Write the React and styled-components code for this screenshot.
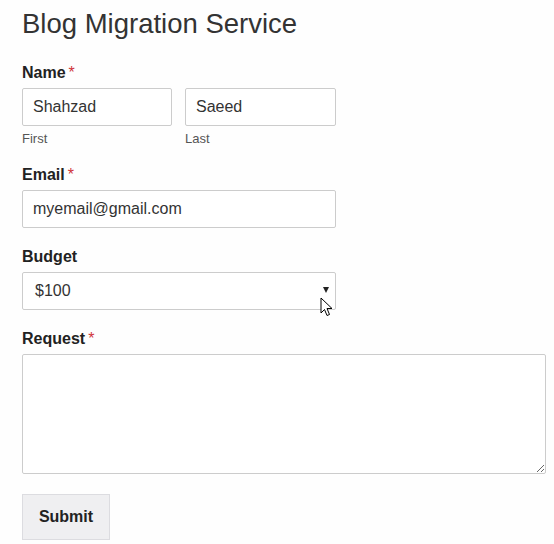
import styled, { createGlobalStyle } from 'styled-components';

const GlobalStyle = createGlobalStyle`
  body {
    margin: 0;
    background: #fefefe;
    font-family: 'Liberation Sans', Arial, sans-serif;
    color: #333;
  }
`;

const Page = styled.form`
  padding: 8px 22px 0 22px;
  width: 524px;
  box-sizing: border-box;
  position: relative;
`;

const Title = styled.h1`
  margin: 0 0 24px;
  font-size: 27.5px;
  font-weight: 400;
  line-height: 32px;
  color: #333;
`;

const Field = styled.div`
  margin-bottom: ${p => p.gap || 18}px;
`;

const Label = styled.div`
  font-weight: 700;
  font-size: 16px;
  line-height: 18px;
  margin-bottom: 6px;
  color: #222;
`;

const Req = styled.span`
  color: #d0343a;
  font-weight: 400;
  margin-left: 3px;
`;

const Row = styled.div`
  display: flex;
  gap: 13px;
`;

const Col = styled.div`
  display: flex;
  flex-direction: column;
`;

const Input = styled.input`
  box-sizing: border-box;
  width: ${p => p.w}px;
  height: 38px;
  border: 1px solid #ccc;
  border-radius: 2px;
  padding: 0 10px;
  font: 16px 'Liberation Sans', Arial, sans-serif;
  color: #333;
  background: #fff;
  outline: none;
`;

const SubLabel = styled.span`
  font-size: 13px;
  color: #555;
  margin-top: 5px;
  line-height: 15px;
`;

const SelectBox = styled.div`
  position: relative;
  box-sizing: border-box;
  width: 314px;
  height: 38px;
  border: 1px solid #ccc;
  border-radius: 2px;
  background: #fff;
  display: flex;
  align-items: center;
  padding: 0 12px;
  font-size: 16px;
  color: #333;
`;

const Arrow = styled.span`
  position: absolute;
  right: 6px;
  top: 14px;
  width: 0;
  height: 0;
  border-left: 3px solid transparent;
  border-right: 3px solid transparent;
  border-top: 6px solid #222;
`;

const TextArea = styled.textarea`
  display: block;
  box-sizing: border-box;
  width: 524px;
  height: 120px;
  border: 1px solid #ccc;
  border-radius: 2px;
  background: #fff;
  font: 16px 'Liberation Sans', Arial, sans-serif;
  outline: none;
`;

const Submit = styled.button`
  box-sizing: border-box;
  width: 88px;
  height: 46px;
  background: #efeff1;
  border: 1px solid #dcdce0;
  border-radius: 0;
  font: 700 16px 'Liberation Sans', Arial, sans-serif;
  color: #222;
`;

const Cursor = styled.svg`
  position: absolute;
  left: 320px;
  top: 297px;
  pointer-events: none;
`;

export default function App() {
  return (
    <>
      <GlobalStyle />
      <Page onSubmit={e => e.preventDefault()}>
        <Title>Blog Migration Service</Title>

        <Field gap={20}>
          <Label>Name<Req>*</Req></Label>
          <Row>
            <Col>
              <Input w={150} defaultValue="Shahzad" />
              <SubLabel>First</SubLabel>
            </Col>
            <Col>
              <Input w={151} defaultValue="Saeed" />
              <SubLabel>Last</SubLabel>
            </Col>
          </Row>
        </Field>

        <Field gap={20}>
          <Label>Email<Req>*</Req></Label>
          <Input w={314} defaultValue="myemail@gmail.com" />
        </Field>

        <Field gap={20}>
          <Label>Budget</Label>
          <SelectBox>
            $100
            <Arrow />
          </SelectBox>
        </Field>

        <Field gap={20}>
          <Label>Request<Req>*</Req></Label>
          <TextArea />
        </Field>

        <Submit type="submit">Submit</Submit>

        <Cursor width="13" height="20" viewBox="0 0 13 20">
          <path d="M1 1 L1 16 L4.5 12.5 L7 18.5 L9.5 17.5 L7 11.5 L12 11.5 Z" fill="#fff" stroke="#000" strokeWidth="1" />
        </Cursor>
      </Page>
    </>
  );
}
